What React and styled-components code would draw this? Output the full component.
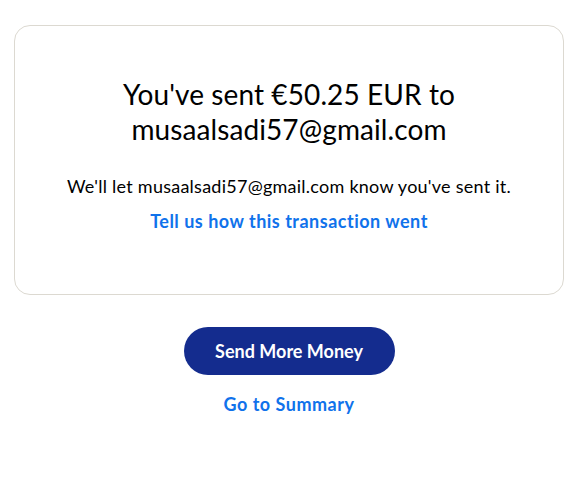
import React from 'react'
import styled, { createGlobalStyle } from 'styled-components'

const GlobalStyle = createGlobalStyle`
    body {
        margin: 0;
        background: #ffffff;
        font-family: Lato, "Noto Sans", sans-serif;
        color: #001435;
    }
`

const Page = styled.div`
    padding: 25px 11px 0 14px;
    display: flex;
    flex-direction: column;
    align-items: center;
`

const Card = styled.div`
    box-sizing: border-box;
    width: 100%;
    height: 270px;
    border: 1px solid #dcd9d1;
    border-radius: 16px;
    padding: 51px 24px 0;
    display: flex;
    flex-direction: column;
    align-items: center;
    text-align: center;
`

const Heading = styled.h1`
    margin: 0;
    font-size: 28px;
    font-weight: 400;
    line-height: 35px;
    letter-spacing: 0.1px;
    color: #000000;
`

const Note = styled.p`
    margin: 27px 0 0;
    font-size: 18px;
    letter-spacing: 0.25px;
    line-height: 24px;
    color: #000000;
`

const TextLink = styled.a`
    display: block;
    margin-top: ${p => p.$gap || 11}px;
    font-size: 18px;
    font-weight: 700;
    letter-spacing: 0.5px;
    line-height: 24px;
    color: #1072eb;
    text-decoration: none;
    cursor: pointer;
`

const PrimaryButton = styled.button`
    margin-top: 32px;
    width: 211px;
    height: 48px;
    border: none;
    border-radius: 24px;
    background-color: #142c8e;
    color: #ffffff;
    font-family: inherit;
    font-size: 18px;
    font-weight: 700;
    cursor: pointer;
`

const App = () => {
    return (
        <>
            <GlobalStyle />
            <Page>
                <Card>
                    <Heading>
                        You've sent €50.25 EUR to<br />musaalsadi57@gmail.com
                    </Heading>
                    <Note>We'll let musaalsadi57@gmail.com know you've sent it.</Note>
                    <TextLink>Tell us how this transaction went</TextLink>
                </Card>
                <PrimaryButton>Send More Money</PrimaryButton>
                <TextLink $gap={17}>Go to Summary</TextLink>
            </Page>
        </>
    )
}

export default App
